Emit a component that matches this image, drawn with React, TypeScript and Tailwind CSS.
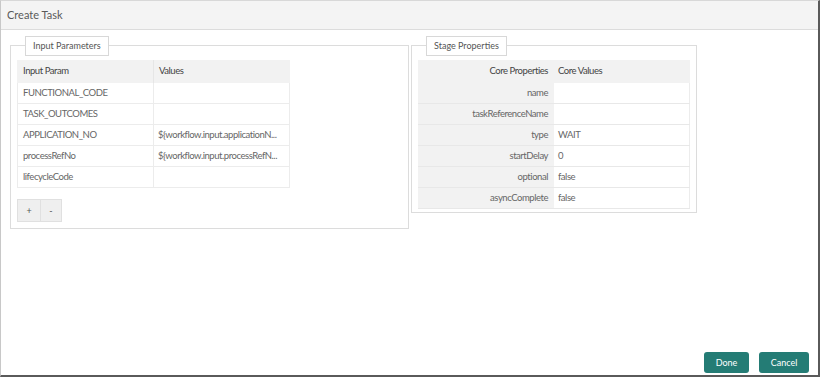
import React from "react";

const inputRows: [string, string][] = [
  ["FUNCTIONAL_CODE", ""],
  ["TASK_OUTCOMES", ""],
  ["APPLICATION_NO", "${workflow.input.applicationN..."],
  ["processRefNo", "${workflow.input.processRefN..."],
  ["lifecycleCode", ""],
];

const coreRows: [string, string][] = [
  ["name", ""],
  ["taskReferenceName", ""],
  ["type", "WAIT"],
  ["startDelay", "0"],
  ["optional", "false"],
  ["asyncComplete", "false"],
];

export default function App() {
  return (
    <div
      className="w-[820px] h-[377px] bg-white flex flex-col border-l border-l-[#c8c8c8] border-r-2 border-r-[#5a5a5a] border-b-2 border-b-[#5a5a5a] border-t border-t-[#d8d8d8] text-[#555] overflow-hidden"
      style={{ fontFamily: 'Lato, "Open Sans", sans-serif' }}
    >
      <div className="h-[29px] bg-[#f4f4f4] border-b border-[#dcdcdc] flex items-center pl-[6px] text-[11px] text-[#5a5a5a] shrink-0">
        Create Task
      </div>
      <div className="flex-1 flex flex-col">
        <div className="flex items-start pt-[6px]">
          {/* Input Parameters */}
          <div className="ml-[9px] w-[399px] relative pt-[9px]">
            <div className="border border-[#dcdcdc] h-[184px] pt-[14px] pl-[6px]">
              <div className="w-[273px] text-[9.5px] tracking-[-0.45px]">
                <div className="flex h-[23px] bg-[#f2f2f2] text-[#444]">
                  <div className="w-[137px] border-r border-[#e6e6e6] flex items-center pl-[6px]">Input Param</div>
                  <div className="flex-1 flex items-center pl-[5px]">Values</div>
                </div>
                {inputRows.map(([a, b]) => (
                  <div key={a} className="flex h-[21px] border-b border-x border-[#ececec] bg-white text-[#666]">
                    <div className="w-[136px] border-r border-[#ececec] flex items-center pl-[5px]">{a}</div>
                    <div className="flex-1 flex items-center pl-[4px] whitespace-nowrap overflow-hidden">{b}</div>
                  </div>
                ))}
              </div>
              <div className="flex mt-[11px] text-[9px] text-[#555]">
                <div className="w-[24px] h-[23px] bg-[#efefef] border border-[#e0e0e0] flex items-center justify-center">+</div>
                <div className="w-[21px] h-[23px] bg-[#efefef] border border-l-0 border-[#e0e0e0] flex items-center justify-center">-</div>
              </div>
            </div>
            <div className="absolute left-[15px] top-0 h-[20px] px-[7px] bg-white border border-[#d8d8d8] flex items-center text-[9px] text-[#555]">
              Input Parameters
            </div>
          </div>

          {/* Stage Properties */}
          <div className="ml-[2px] w-[286px] relative pt-[9px]">
            <div className="border border-[#dcdcdc] h-[168px] pt-[14px] pl-[6px]">
              <div className="w-[272px] text-[9.5px] tracking-[-0.45px]">
                <div className="flex h-[23px] bg-[#f2f2f2] text-[#444]">
                  <div className="w-[136px] flex items-center justify-end pr-[6px]">Core Properties</div>
                  <div className="flex-1 flex items-center pl-[4px]">Core Values</div>
                </div>
                {coreRows.map(([a, b]) => (
                  <div key={a} className="flex h-[21px] border-b border-[#e8e8e8] text-[#666]">
                    <div className="w-[136px] bg-[#f2f2f2] flex items-center justify-end pr-[6px]">{a}</div>
                    <div className="flex-1 bg-white border-r border-[#ececec] flex items-center pl-[4px]">{b}</div>
                  </div>
                ))}
              </div>
            </div>
            <div className="absolute left-[15px] top-0 h-[20px] px-[7px] bg-white border border-[#d8d8d8] flex items-center text-[9px] text-[#555]">
              Stage Properties
            </div>
          </div>
        </div>
        <div className="flex-1" />
        <div className="flex justify-end gap-[10px] pr-[9px] pb-[2px]">
          <button className="w-[45px] h-[21px] rounded-[3px] bg-[#247c75] text-white text-[9px] flex items-center justify-center">Done</button>
          <button className="w-[50px] h-[21px] rounded-[3px] bg-[#247c75] text-white text-[9px] flex items-center justify-center">Cancel</button>
        </div>
      </div>
    </div>
  );
}
